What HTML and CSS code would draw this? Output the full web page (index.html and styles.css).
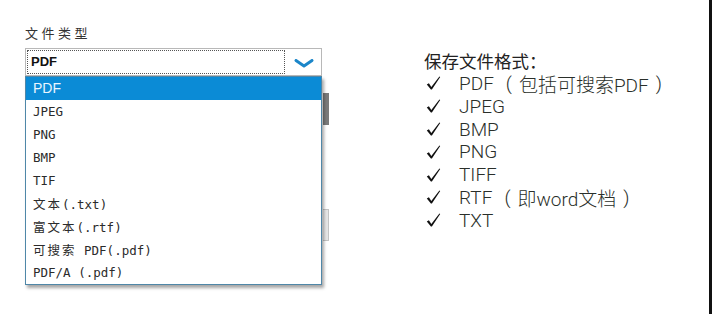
FILE: index.html
```html
<!DOCTYPE html>
<html lang="zh-CN">
<head>
  <meta charset="UTF-8" />
  <meta name="viewport" content="width=device-width, initial-scale=1.0"/>
  <title>文件类型</title>
  <link rel="stylesheet" href="styles.css">
</head>
<body>
  <div class="page">
    <section class="filetype">
      <div class="label">文件类型</div>
      <div class="select">
        <div class="select-value">PDF</div>
        <div class="select-arrow">
          <svg width="20" height="9" viewBox="0 0 20 9">
            <path d="M2 1.5 L10 7 L18 1.5" fill="none" stroke="#1b86c9" stroke-width="3" stroke-linecap="round" stroke-linejoin="round"/>
          </svg>
        </div>
      </div>
      <div class="dropdown">
        <!-- restos del formulario que quedan detrás de la lista -->
        <div class="under under-dark"></div>
        <div class="under under-light"></div>
        <ul class="options">
          <li class="active">PDF</li>
          <li>JPEG</li>
          <li>PNG</li>
          <li>BMP</li>
          <li>TIF</li>
          <li><span class="cjk">文本</span>(.txt)</li>
          <li><span class="cjk">富文本</span>(.rtf)</li>
          <li><span class="cjk">可搜索</span> PDF(.pdf)</li>
          <li>PDF/A (.pdf)</li>
        </ul>
      </div>
    </section>

    <section class="formats">
      <div class="formats-title">保存文件格式：</div>
      <ul class="format-list">
        <li><svg class="check" viewBox="0 0 15 14"><path d="M0.8 8.4 L2.9 7.3 L5.3 10.9 L13.4 0.5 L14.2 1.1 L5.9 13.6 L4.9 13.6 Z"/></svg>PDF<span class="paren open">(</span>包括可搜索PDF<span class="paren close">)</span></li>
        <li><svg class="check" viewBox="0 0 15 14"><path d="M0.8 8.4 L2.9 7.3 L5.3 10.9 L13.4 0.5 L14.2 1.1 L5.9 13.6 L4.9 13.6 Z"/></svg>JPEG</li>
        <li><svg class="check" viewBox="0 0 15 14"><path d="M0.8 8.4 L2.9 7.3 L5.3 10.9 L13.4 0.5 L14.2 1.1 L5.9 13.6 L4.9 13.6 Z"/></svg>BMP</li>
        <li><svg class="check" viewBox="0 0 15 14"><path d="M0.8 8.4 L2.9 7.3 L5.3 10.9 L13.4 0.5 L14.2 1.1 L5.9 13.6 L4.9 13.6 Z"/></svg>PNG</li>
        <li><svg class="check" viewBox="0 0 15 14"><path d="M0.8 8.4 L2.9 7.3 L5.3 10.9 L13.4 0.5 L14.2 1.1 L5.9 13.6 L4.9 13.6 Z"/></svg>TIFF</li>
        <li><svg class="check" viewBox="0 0 15 14"><path d="M0.8 8.4 L2.9 7.3 L5.3 10.9 L13.4 0.5 L14.2 1.1 L5.9 13.6 L4.9 13.6 Z"/></svg>RTF<span class="paren open">(</span>即word文档<span class="paren close">)</span></li>
        <li><svg class="check" viewBox="0 0 15 14"><path d="M0.8 8.4 L2.9 7.3 L5.3 10.9 L13.4 0.5 L14.2 1.1 L5.9 13.6 L4.9 13.6 Z"/></svg>TXT</li>
      </ul>
    </section>
  </div>
</body>
</html>
```

FILE: styles.css
```css
body {
  margin: 0;
  padding: 0;
  background: #ffffff;
  font-family: "Liberation Sans", "Noto Sans CJK SC", sans-serif;
}
.page {
  display: flex;
  height: 314px;
  box-sizing: border-box;
  border-right: 3px solid #111111;
}
.filetype {
  width: 297px;
  padding: 25px 0 0 25px;
}
.label {
  font-family: "Noto Sans CJK SC", sans-serif;
  font-size: 13px;
  line-height: 16px;
  letter-spacing: 3.5px;
  color: #333333;
}
.select {
  display: flex;
  height: 28px;
  margin-top: 7px;
  box-sizing: border-box;
  border: 1px solid #b8b8b8;
  background: #ffffff;
}
.select-value {
  flex: 1;
  margin: 1px;
  padding-left: 3px;
  border: 1px dotted #555555;
  font-size: 13px;
  font-weight: bold;
  line-height: 22px;
  color: #111111;
}
.select-arrow {
  width: 35px;
  display: flex;
  align-items: center;
  justify-content: center;
  padding-top: 2px;
}
.dropdown {
  position: relative;
}
.under {
  position: absolute;
  left: 298px;
  width: 6px;
}
.under-dark {
  top: 17px;
  height: 32px;
  background: #7a7a7a;
}
.under-light {
  top: 133px;
  height: 30px;
  background: #e6e6e6;
  border: 1px solid #c4c4c4;
  border-left: none;
  width: 5px;
}
.options {
  position: relative;
  list-style: none;
  margin: 0;
  padding: 0;
  border: 1px solid #4f87a8;
  background: #ffffff;
  box-shadow: 2px 3px 3px rgba(0, 0, 0, 0.35);
}
.options li {
  height: 23px;
  line-height: 23px;
  padding-left: 7px;
  font-family: "DejaVu Sans Mono", "Noto Sans CJK SC", monospace;
  font-size: 12.5px;
  color: #2b2b2b;
}
.options li.active {
  background: #0b8bd6;
  color: #eaf6ff;
  font-family: "Liberation Sans", sans-serif;
  font-size: 14px;
}
.options .cjk {
  font-family: "Noto Sans CJK SC", sans-serif;
  letter-spacing: 2px;
}
.formats {
  margin-left: 102px;
  padding-top: 49px;
  color: #222222;
}
.formats-title {
  font-family: "Noto Sans CJK SC", sans-serif;
  font-size: 17.5px;
  line-height: 23px;
}
.format-list {
  list-style: none;
  margin: 0;
  padding: 0;
}
.format-list li {
  display: flex;
  align-items: center;
  height: 22.8px;
  font-family: "Roboto", "Noto Sans CJK SC", sans-serif;
  font-weight: 300;
  font-size: 19px;
  color: #2a2f2a;
  white-space: nowrap;
}
.check {
  width: 15px;
  height: 14px;
  margin: 0 18px 0 2px;
  fill: #111111;
}
.paren {
  font-weight: 300;
}
.paren.open {
  margin: 0 7px 0 12px;
}
.paren.close {
  margin: 0 0 0 7px;
}
```
